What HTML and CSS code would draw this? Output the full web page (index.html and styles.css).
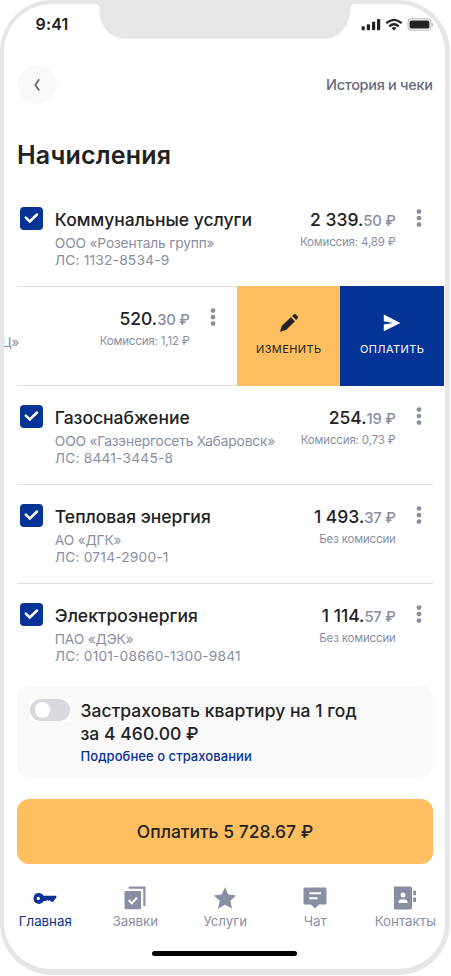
FILE: index.html
```html
<!DOCTYPE html>
<html lang="ru">
<head>
<meta charset="utf-8">
<title>Начисления</title>
<link rel="stylesheet" href="styles.css">
</head>
<body>
<svg class="defs" width="0" height="0" aria-hidden="true">
  <symbol id="check" viewBox="0 0 23 23"><path d="M5.800 10.700 9.800 14.500 17 7.500" fill="none" stroke="#fff" stroke-width="2.500" stroke-linecap="round" stroke-linejoin="miter"/></symbol>
  <symbol id="dots" viewBox="0 0 6 18"><circle cx="3" cy="2.600" r="2.400"/><circle cx="3" cy="9.100" r="2.400"/><circle cx="3" cy="15.600" r="2.400"/></symbol>
</svg>
<div class="phone">
  <svg class="notch" viewBox="0 0 260 35" aria-hidden="true"><path d="M0 0H260Q255.500 0 255.500 4V4C255.500 20 246 34.600 229.500 34.600H30.500C14 34.600 4.500 20 4.500 8V4Q4.500 0 0 0Z"/></svg>
  <header class="status">
    <span class="time">9:41</span>
    <svg class="status-icons" viewBox="0 0 72 14" aria-hidden="true">
      <g fill="#222"><rect x=".6" y="8.200" width="3.200" height="4" rx=".9"/><rect x="5.800" y="6.300" width="3.200" height="5.900" rx=".9"/><rect x="11" y="3.700" width="3.200" height="8.500" rx=".9"/><rect x="16" y="1" width="3.200" height="11.200" rx=".9"/></g>
      <g fill="none" stroke="#222" stroke-width="2.300"><path d="M25.300 5.100Q33 -1.400 40.700 5.100"/><path d="M28.300 8.300Q33 4.100 37.700 8.300"/></g>
      <path fill="#222" d="M30.500 9.900Q33 8.100 35.500 9.900L33 12.600Z"/>
      <rect x="47" y=".8" width="23" height="11.400" rx="3.200" fill="none" stroke="#b5b5b5"/>
      <rect x="48.600" y="2.500" width="19.800" height="8" rx="1.600" fill="#222"/>
      <path fill="#aaa" d="M71 4.600Q72 5.500 72 6.500T71 8.400Z"/>
    </svg>
  </header>
  <div class="toolbar">
    <span class="back"><svg viewBox="0 0 8 14"><path d="M6.200 1.200 2.300 6.900 6.200 12.600" fill="none" stroke="#666a7b" stroke-width="1.800"/></svg></span>
    <span class="history">История и чеки</span>
  </div>
  <h1>Начисления</h1>
  <main class="list">
    <section class="row">
      <span class="box"><svg><use href="#check"/></svg></span>
      <div class="info"><h2>Коммунальные услуги</h2><p class="org">ООО «Розенталь групп»</p><p class="acc">ЛС: 1132-8534-9</p></div>
      <div class="sum"><div class="amount">2 339.<small>50 ₽</small></div><p class="fee">Комиссия: 4,89 ₽</p></div>
      <svg class="dots"><use href="#dots"/></svg>
    </section>
    <section class="row swiped">
      <div class="tail">Ц»</div>
      <div class="sum"><div class="amount">520.<small>30 ₽</small></div><p class="fee">Комиссия: 1,12 ₽</p></div>
      <svg class="dots"><use href="#dots"/></svg>
      <div class="action edit"><svg viewBox="0 0 20 20"><path d="M1 18.800 2.700 12.900 11.800 4.200 16 8.300 7 17.100ZM13.100 3 14.900 1.300Q15.800.5 16.700 1.300L18.800 3.400Q19.600 4.200 18.800 5.100L17.200 6.900Z" fill="#222"/></svg><span>ИЗМЕНИТЬ</span></div>
      <div class="action pay"><svg viewBox="0 0 20 20"><path d="M1.800 1.600 18.400 9.900 1.800 18.300V11.600L11 9.900 1.800 8.200Z" fill="#fff"/></svg><span>ОПЛАТИТЬ</span></div>
    </section>
    <section class="row">
      <span class="box"><svg><use href="#check"/></svg></span>
      <div class="info"><h2>Газоснабжение</h2><p class="org">ООО «Газэнергосеть Хабаровск»</p><p class="acc">ЛС: 8441-3445-8</p></div>
      <div class="sum"><div class="amount">254.<small>19 ₽</small></div><p class="fee">Комиссия: 0,73 ₽</p></div>
      <svg class="dots"><use href="#dots"/></svg>
    </section>
    <section class="row">
      <span class="box"><svg><use href="#check"/></svg></span>
      <div class="info"><h2>Тепловая энергия</h2><p class="org">АО «ДГК»</p><p class="acc">ЛС: 0714-2900-1</p></div>
      <div class="sum"><div class="amount">1 493.<small>37 ₽</small></div><p class="fee">Без комиссии</p></div>
      <svg class="dots"><use href="#dots"/></svg>
    </section>
    <section class="row">
      <span class="box"><svg><use href="#check"/></svg></span>
      <div class="info"><h2>Электроэнергия</h2><p class="org">ПАО «ДЭК»</p><p class="acc">ЛС: 0101-08660-1300-9841</p></div>
      <div class="sum"><div class="amount">1 114.<small>57 ₽</small></div><p class="fee">Без комиссии</p></div>
      <svg class="dots"><use href="#dots"/></svg>
    </section>
  </main>
  <section class="insurance">
    <span class="toggle-wrap"><span class="toggle"></span></span>
    <div><p class="offer">Застраховать квартиру на 1 год<br>за 4 460.00 ₽</p><p class="more">Подробнее о страховании</p></div>
  </section>
  <div class="button">Оплатить 5 728.67 ₽</div>
  <nav>
    <div class="tab active"><svg viewBox="0 0 24 24"><path fill-rule="evenodd" d="M6 7A5.400 5.400 0 1 0 10.700 15H12.800L14 14 15.300 15 16.800 14.100 18 15.800H20.200L21.800 13.500Q23.600 12.500 23.500 9.800H10.700A5.400 5.400 0 0 0 6 7ZM5.300 10.800A1.600 1.600 0 1 1 5.300 14 1.600 1.600 0 1 1 5.300 10.800Z"/></svg><span>Главная</span></div>
    <div class="tab"><svg viewBox="0 0 24 24"><path d="M5.800.5H22.500V20H20.300V2.700H5.800Z"/><rect x="1.500" y="5" width="16.500" height="18.300" rx="1.200"/><path d="M5.700 14.200 8.700 17.200 14 11.700" fill="none" stroke="#fff" stroke-width="2"/></svg><span>Заявки</span></div>
    <div class="tab"><svg viewBox="0 0 24 24"><path d="M12 1.300 15.300 8.600 23.200 9.500 17.300 14.800 19 22.700 12 18.700 5 22.700 6.700 14.800.8 9.500 8.700 8.600Z"/></svg><span>Услуги</span></div>
    <div class="tab"><svg viewBox="0 0 24 24"><path d="M2 1.500H22Q23.500 1.500 23.500 3V17Q23.500 18.500 22 18.500H16.200L12 22.400 7.800 18.500H2Q.5 18.500.5 17V3Q.5 1.500 2 1.500Z"/><path d="M6.200 7.200H18.200M6.200 12.200H14.500" stroke="#fff" stroke-width="2"/></svg><span>Чат</span></div>
    <div class="tab"><svg viewBox="0 0 24 24"><path d="M1 .6H17.500Q19 .6 19 2.200V21.800Q19 23.400 17.500 23.400H1ZM20.200 4.700H23V9.200H20.200ZM20.200 11.500H23V16H20.200Z"/><circle cx="10" cy="9" r="2.500" fill="#fff"/><path d="M5.500 17.100V15.600C5.500 12.300 14.500 12.300 14.500 15.600V17.100Z" fill="#fff"/></svg><span>Контакты</span></div>
  </nav>
  <div class="home-bar"></div>
</div>
</body>
</html>
```
FILE: styles.css
```css
* { box-sizing: border-box; margin: 0; padding: 0; }
body { width: 451px; height: 976px; overflow: hidden; background: #fff; color: #222; font-family: Inter, "Noto Sans", sans-serif; }
svg { display: block; flex: none; }
.defs { position: absolute; }
.phone {
  position: relative;
  width: 450px; height: 974.5px;
  border: 4px solid #e6e6e6; border-right-width: 5px; border-bottom-width: 6px; border-radius: 52px;
  background: #fff; overflow: hidden;
}
.notch { position: absolute; left: 91px; top: 0; width: 260px; height: 35px; fill: #e6e6e6; }
.status { display: flex; justify-content: space-between; height: 40px; padding: 10px 12.500px 0 31.500px; }
.time { font-size: 16px; font-weight: 600; line-height: 20px; letter-spacing: .2px; }
.status-icons { width: 72px; height: 14px; margin-top: 4px; }
.toolbar { display: flex; justify-content: space-between; align-items: center; height: 40px; margin: 20.500px 12.300px 0 13.300px; }
.back { display: grid; place-items: center; width: 39.500px; height: 39.500px; border-radius: 50%; background: #f9f9f9; }
.back svg { width: 8px; height: 14px; }
.history { font-size: 14.500px; font-weight: 500; letter-spacing: -.3px; color: #666a7b; }
h1 { height: 30px; margin: 35px 0 0 13px; font-size: 25px; font-weight: 600; line-height: 30px; letter-spacing: .2px; }
.list { margin: 18px 12.300px 0 13.300px; }
.row { display: flex; align-items: flex-start; height: 99px; padding-top: 21.500px; border-bottom: 1px solid #dfdfe6; }
.row:last-child { border-bottom: 0; }
.box { width: 23px; height: 23px; margin: -2.200px 12px 0 2.500px; border-radius: 4px; background: #053396; }
.box svg { width: 23px; height: 23px; }
.info { flex: 1; min-width: 0; white-space: nowrap; }
h2 { font-size: 17.500px; font-weight: 500; line-height: 22px; }
.org, .acc, .tail { font-size: 13.750px; line-height: 17.300px; letter-spacing: -.17px; color: #8a8ea3; }
.org { margin-top: 3.500px; }
.acc { letter-spacing: .2px; }
.sum { flex: none; text-align: right; }
.amount { font-size: 17.500px; font-weight: 500; line-height: 22px; white-space: nowrap; }
.amount small { font-size: 14.800px; font-weight: 500; letter-spacing: -.2px; color: #8a8ea3; }
.fee { margin-top: 2.300px; font-size: 11.500px; line-height: 16px; letter-spacing: -.16px; color: #8a8ea3; }
.dots { width: 6px; height: 18px; margin: -.3px 10.300px 0 20.700px; fill: #8a8ea3; }
.swiped { position: relative; margin: 0 -11px 0 -13.300px; border: 0; }
.swiped::after { content: ""; position: absolute; left: 13.300px; bottom: 0; width: 220px; height: 1px; background: #dfdfe6; }
.tail { flex: 1; margin: 25.500px 0 0 -2.500px; }
.swiped .dots { margin-right: 20.700px; }
.action { position: relative; z-index: 1; display: flex; flex-direction: column; align-items: center; width: 103.300px; height: 100px; margin-top: -22.500px; padding-top: 27.500px; font-size: 11px; font-weight: 400; letter-spacing: .4px; }
.action svg { width: 20px; height: 20px; }
.action span { margin-top: 9px; line-height: 14px; }
.edit { background: #ffbf60; }
.pay { background: #053396; color: #fff; }
.insurance { display: flex; height: 91px; margin: 3.500px 12.300px 0 13.300px; padding: 13px 0 0 12.700px; border-radius: 11px; background: #f9f9f9; }
.toggle-wrap { width: 40px; height: 22px; margin-right: 10.500px; background: #fff; }
.toggle { display: block; width: 40px; height: 22px; padding: 3.300px 4.700px; border-radius: 11px; background: #d8d9df; }
.toggle::before { content: ""; display: block; width: 15.400px; height: 15.400px; border-radius: 50%; background: #fff; }
.offer { font-size: 17.500px; font-weight: 500; line-height: 23px; letter-spacing: .05px; }
.more { margin-top: 2px; font-size: 13px; font-weight: 500; line-height: 18px; letter-spacing: .06px; color: #053396; }
.button { height: 65px; margin: 22px 12.300px 0 13.300px; border-radius: 12px; background: #ffbf60; font-size: 17.500px; font-weight: 500; line-height: 65px; text-align: center; }
nav { display: flex; margin: 21.500px 0 0 -3.700px; }
.tab { display: flex; flex: none; flex-direction: column; align-items: center; width: 90px; color: #8a8ea3; fill: #8a8ea3; font-size: 13.300px; line-height: 18px; }
.tab svg { width: 24px; height: 24px; margin-bottom: 2.500px; }
.active { color: #053396; fill: #053396; }
.home-bar { width: 145px; height: 5.500px; margin: 20.500px auto 0; border-radius: 3px; background: #000; }
```
